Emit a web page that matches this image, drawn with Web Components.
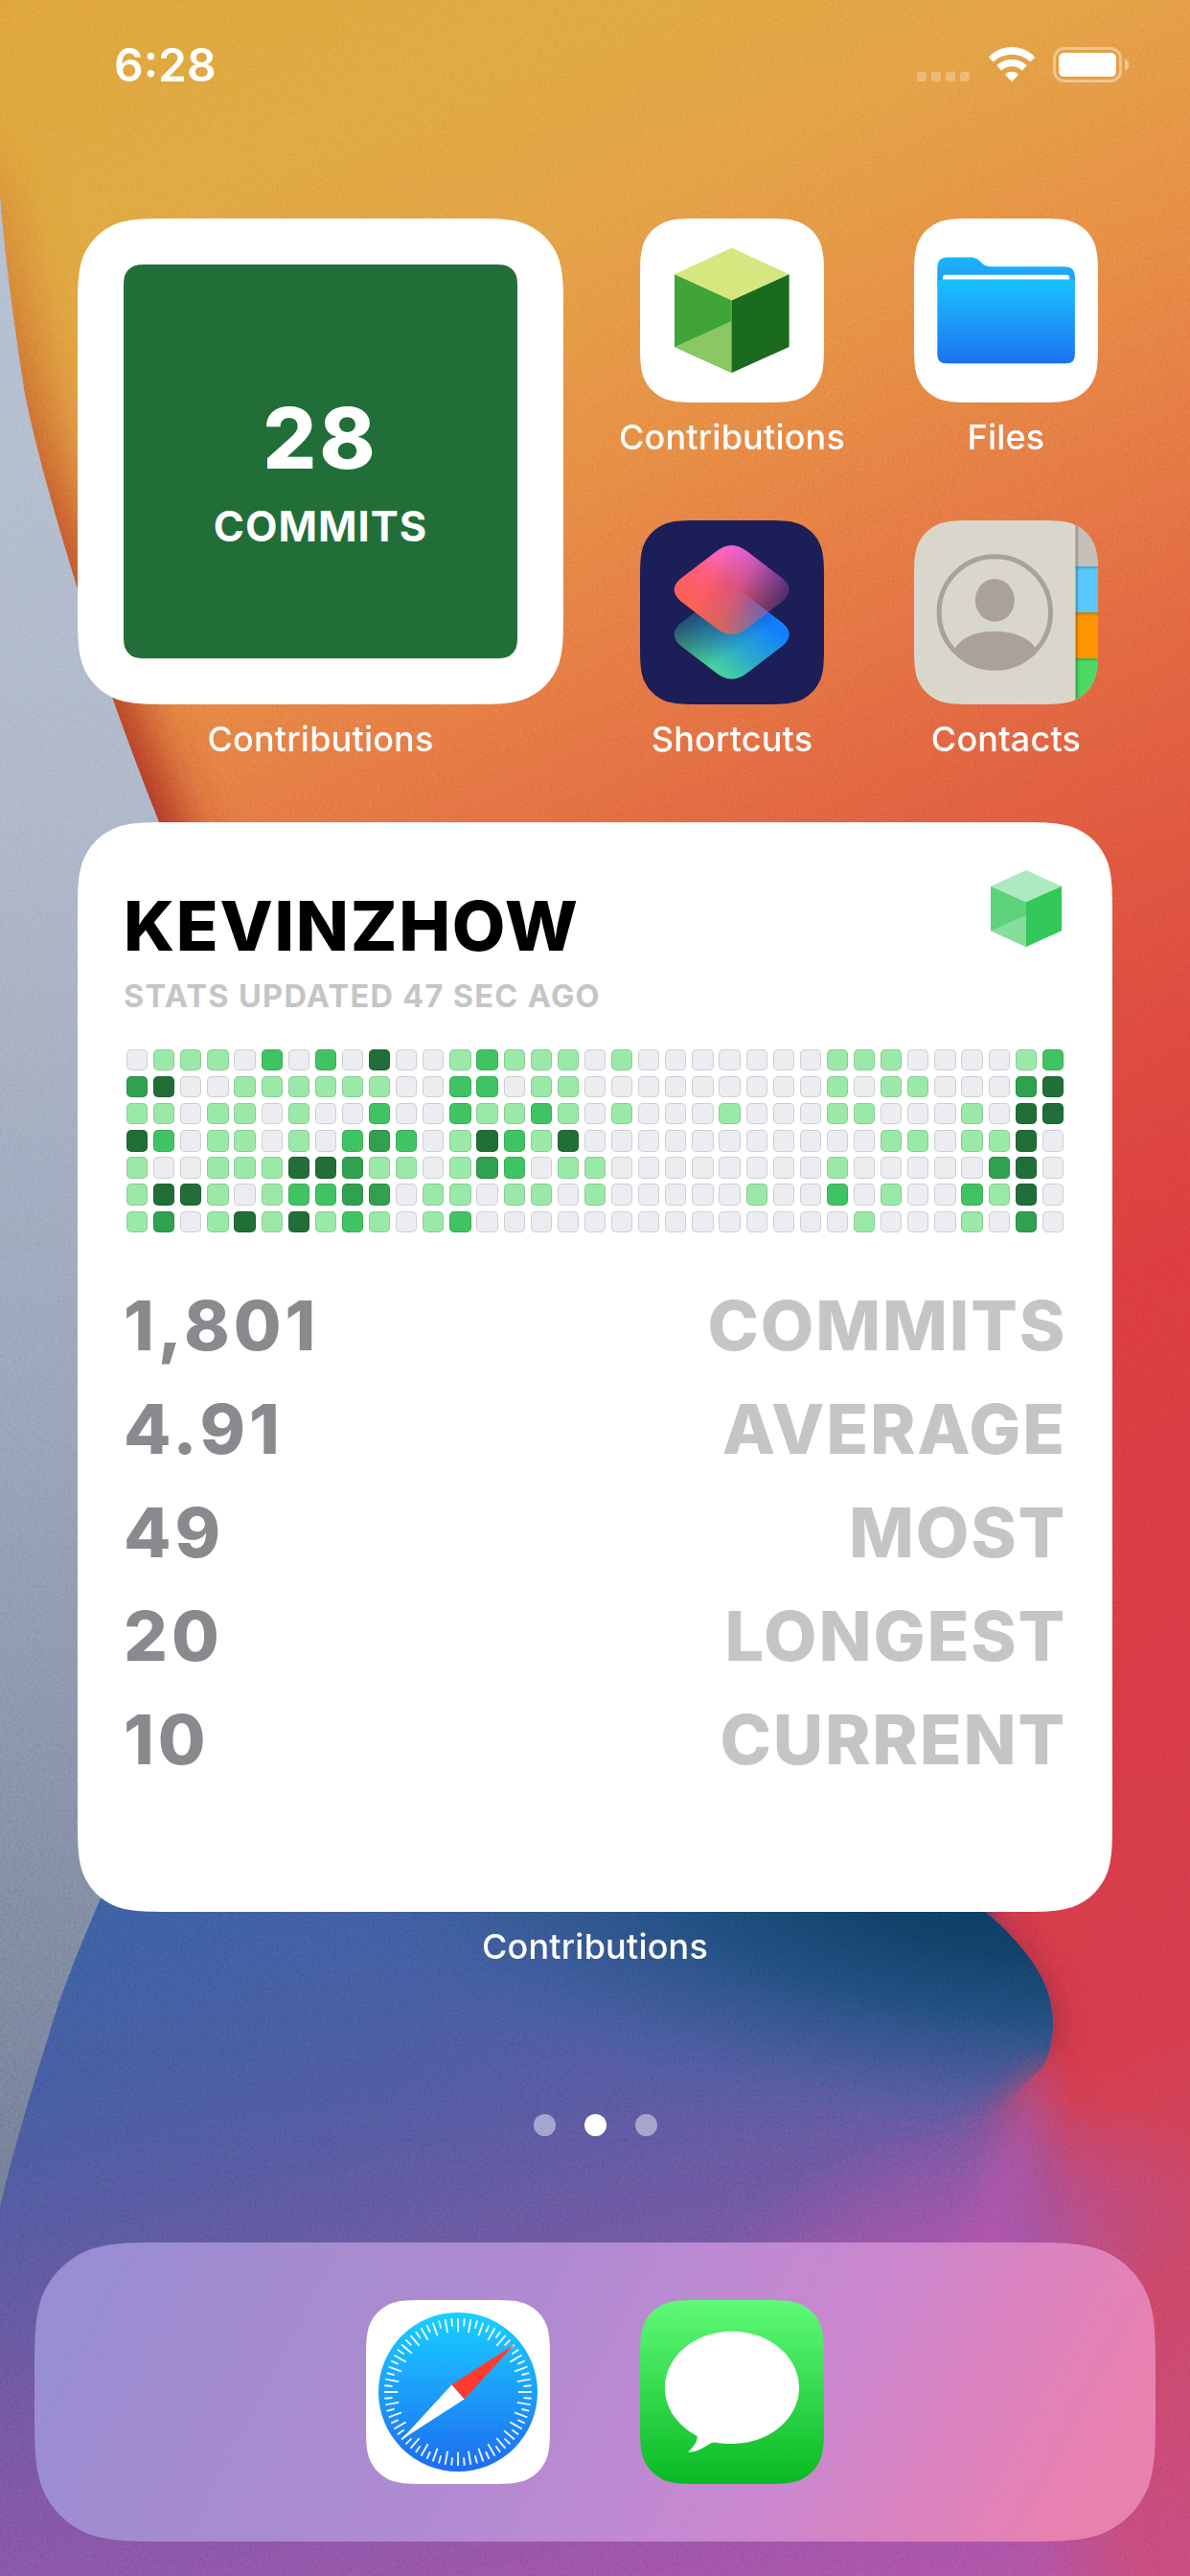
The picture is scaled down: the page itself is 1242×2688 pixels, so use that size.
<!DOCTYPE html>
<html lang="en">
<head>
<meta charset="utf-8">
<title>Home Screen</title>
<style>
    html, body {
        margin: 0;
        padding: 0;
    }

    body {
        width: 1242px;
        height: 2688px;
        overflow: hidden;
        font-family: "Inter", "Liberation Sans", sans-serif;
        color: white;
        -webkit-font-smoothing: antialiased;
    }
</style>
</head>
<body>

<home-screen>
    <status-bar slot="status" time="6:28"></status-bar>

    <app-widget label="Contributions" width="507" height="507">
        <commit-day count="28" unit="COMMITS"></commit-day>
    </app-widget>

    <div slot="apps" style="display: contents">
        <app-icon name="Contributions" icon="cube"></app-icon>
        <app-icon name="Files" icon="files"></app-icon>
        <app-icon name="Shortcuts" icon="shortcuts"></app-icon>
        <app-icon name="Contacts" icon="contacts"></app-icon>
    </div>

    <app-widget slot="large" label="Contributions" width="1080" height="1137">
        <commit-stats user="KEVINZHOW" updated="STATS UPDATED 47 SEC AGO">
            <stat-row value="1,801" label="COMMITS"></stat-row>
            <stat-row value="4.91" label="AVERAGE"></stat-row>
            <stat-row value="49" label="MOST"></stat-row>
            <stat-row value="20" label="LONGEST"></stat-row>
            <stat-row value="10" label="CURRENT"></stat-row>
        </commit-stats>
    </app-widget>

    <page-dots slot="dots" pages="3" current="1"></page-dots>

    <app-dock slot="dock">
        <app-icon icon="safari"></app-icon>
        <app-icon icon="messages"></app-icon>
    </app-dock>
</home-screen>

<script>
// Rounded rectangle with the continuous corners that iOS uses
function smoothRect(w, h, r) {
    const a = 1.528665 * r, b = 1.08849296 * r, c = 0.86840694 * r, d = 0.63149379 * r;
    const e = 0.07491139 * r, f = 0.37282383 * r, g = 0.16905956 * r;
    return `M${a} 0 L${w - a} 0 ` +
        `C${w - b} 0 ${w - c} 0 ${w - d} ${e} C${w - f} ${g} ${w - g} ${f} ${w - e} ${d} C${w} ${c} ${w} ${b} ${w} ${a} ` +
        `L${w} ${h - a} ` +
        `C${w} ${h - b} ${w} ${h - c} ${w - e} ${h - d} C${w - g} ${h - f} ${w - f} ${h - g} ${w - d} ${h - e} C${w - c} ${h} ${w - b} ${h} ${w - a} ${h} ` +
        `L${a} ${h} ` +
        `C${b} ${h} ${c} ${h} ${d} ${h - e} C${f} ${h - g} ${g} ${h - f} ${e} ${h - d} C0 ${h - c} 0 ${h - b} 0 ${h - a} ` +
        `L0 ${a} ` +
        `C0 ${b} 0 ${c} ${e} ${d} C${g} ${f} ${f} ${g} ${d} ${e} C${c} 0 ${b} 0 ${a} 0 Z`;
}

const ticks = () => {
    let out = '';
    for (let i = 0; i < 72; i++) {
        out += `<path d="M96 19 V${i % 2 ? 27.3 : 33.3}" transform="rotate(${i * 5} 96 96)"/>`;
    }
    return out;
};

const ICONS = {
    cube: `
        <rect width="192" height="192" fill="#fff"/>
        <path d="M95.7 30.6 L155.6 58.3 L95.7 85.4 L36 58.3 Z" fill="#d6e77f"/>
        <path d="M36 58.3 L95.7 85.4 V161 L36 134 Z" fill="#40a438"/>
        <path d="M36 134 L95.7 107 V161 Z" fill="#8bc863"/>
        <path d="M155.6 58.3 V134 L95.7 161 V85.4 Z" fill="#1a6b1e"/>`,
    files: `
        <defs>
            <linearGradient id="front" x1="0" y1="0" x2="0" y2="1">
                <stop offset="0" stop-color="#1ac3fd"/><stop offset="1" stop-color="#1d72f2"/>
            </linearGradient>
            <linearGradient id="back" x1="0" y1="0" x2="0" y2="1">
                <stop offset="0" stop-color="#1bb4fa"/><stop offset="1" stop-color="#1c9bf6"/>
            </linearGradient>
        </defs>
        <rect width="192" height="192" fill="#fff"/>
        <path d="M24.3 70 V51 Q24.3 40.6 34.7 40.6 H60 Q65 40.6 68.5 44.2 L71 46.8 Q74.5 50.2 80 50.2 H157.5 Q167.9 50.2 167.9 60.6 V70 Z" fill="url(#back)"/>
        <path d="M30 66 V61.5 Q30 58.8 32.7 58.8 H159.5 Q162.2 58.8 162.2 61.5 V66 Z" fill="#fff"/>
        <path d="M24.3 67 Q24.3 63.4 30 63.4 H162 Q167.9 63.4 167.9 67 V142 Q167.9 151.3 158.6 151.3 H33.6 Q24.3 151.3 24.3 142 Z" fill="url(#front)"/>`,
    shortcuts: `
        <defs>
            <linearGradient id="warm" gradientUnits="userSpaceOnUse" x1="60" y1="105" x2="105" y2="26">
                <stop offset="0" stop-color="#ff6349"/><stop offset=".5" stop-color="#fc5d78"/><stop offset="1" stop-color="#f968e2"/>
            </linearGradient>
            <linearGradient id="warmFade" gradientUnits="userSpaceOnUse" x1="72" y1="60" x2="146" y2="96">
                <stop offset="0" stop-color="#fff"/><stop offset=".4" stop-color="#fff" stop-opacity=".82"/><stop offset="1" stop-color="#fff" stop-opacity=".22"/>
            </linearGradient>
            <linearGradient id="cool" gradientUnits="userSpaceOnUse" x1="78" y1="164" x2="128" y2="102">
                <stop offset="0" stop-color="#4cdc94"/><stop offset=".5" stop-color="#2aa8cc"/><stop offset="1" stop-color="#137fff"/>
            </linearGradient>
            <linearGradient id="coolFade" gradientUnits="userSpaceOnUse" x1="56" y1="86" x2="92" y2="140">
                <stop offset="0" stop-color="#fff" stop-opacity=".2"/><stop offset="1" stop-color="#fff"/>
            </linearGradient>
            <mask id="warmMask"><rect width="192" height="192" fill="url(#warmFade)"/></mask>
            <mask id="coolMask"><rect width="192" height="192" fill="url(#coolFade)"/></mask>
        </defs>
        <rect width="192" height="192" fill="#1c1e57"/>
        <g mask="url(#coolMask)">
            <path d="M80 78.6 Q95.7 66.6 111.4 78.6 L149.4 107.6 Q162 119.1 149.4 130.6 L111.4 159.6 Q95.7 171.6 80 159.6 L42 130.6 Q29.4 119.1 42 107.6 Z" fill="url(#cool)"/>
        </g>
        <g mask="url(#warmMask)">
            <path d="M80 32 Q95.7 20 111.4 32 L149.4 61 Q162 72.5 149.4 84 L111.4 113 Q95.7 125 80 113 L42 84 Q29.4 72.5 42 61 Z" fill="url(#warm)"/>
        </g>`,
    contacts: `
        <defs>
            <linearGradient id="edge" x1="0" y1="0" x2="1" y2="0">
                <stop offset="0" stop-color="#000" stop-opacity=".28"/><stop offset="1" stop-color="#000" stop-opacity="0"/>
            </linearGradient>
            <linearGradient id="lip" x1="0" y1="0" x2="0" y2="1">
                <stop offset="0" stop-color="#000" stop-opacity=".2"/><stop offset="1" stop-color="#000" stop-opacity="0"/>
            </linearGradient>
        </defs>
        <rect width="192" height="192" fill="#d9d6cc"/>
        <rect x="168.6" width="24" height="48" fill="#c5c1ba"/>
        <rect x="168.6" y="48" width="24" height="48" fill="#5ac8fa"/>
        <rect x="168.6" y="96" width="24" height="48" fill="#ff9500"/>
        <rect x="168.6" y="144" width="24" height="48" fill="#4cd964"/>
        <rect x="168.6" y="48" width="24" height="4" fill="url(#lip)"/>
        <rect x="168.6" y="96" width="24" height="4" fill="url(#lip)"/>
        <rect x="168.6" y="144" width="24" height="4" fill="url(#lip)"/>
        <rect x="168.6" width="4" height="192" fill="url(#edge)"/>
        <circle cx="84.3" cy="96" r="58.2" fill="none" stroke="#a9a19a" stroke-width="5"/>
        <ellipse cx="84.3" cy="83.4" rx="20.5" ry="22.4" fill="#a9a19a"/>
        <path d="M43 133 C50 121 67 115.7 84.3 115.7 C101.6 115.7 118.6 121 126.5 133 L127 137 A58.2 58.2 0 0 1 42 137 Z" fill="#a9a19a"/>`,
    safari: `
        <defs>
            <linearGradient id="dial" x1="0" y1="0" x2="0" y2="1">
                <stop offset="0" stop-color="#19d0ff"/><stop offset="1" stop-color="#1e6bf2"/>
            </linearGradient>
        </defs>
        <rect width="192" height="192" fill="#fff"/>
        <circle cx="96" cy="96" r="83" fill="url(#dial)"/>
        <g stroke="#fff" stroke-width="1.9" stroke-opacity=".9">${ticks()}</g>
        <path d="M155.4 46 L89.4 88.4 L102.6 103.6 Z" fill="#ff3b30"/>
        <path d="M36.6 146 L89.4 88.4 L102.6 103.6 Z" fill="#fff"/>`,
    messages: `
        <defs>
            <linearGradient id="lime" x1="0" y1="0" x2="0" y2="1">
                <stop offset="0" stop-color="#5ffa78"/><stop offset="1" stop-color="#09b923"/>
            </linearGradient>
        </defs>
        <rect width="192" height="192" fill="url(#lime)"/>
        <path d="M96 32.8 C134.7 32.8 166 59 166 91.4 C166 123.8 134.7 150 96 150 C89.5 150 83.5 149.7 77.5 148.4 C71 149 64 158.6 50 158.8 C55 154 60.5 147.5 59.6 142 C38.5 130.5 26 112.5 26 91.4 C26 59 57.3 32.8 96 32.8 Z" fill="#fff"/>`
};

// One digit per day, one string per weekday, oldest week first
const DAYS = [
    '01110202040012111010000000111000012',
    '34001111110022011000000000101100034',
    '11011010020021121010001000110001044',
    '42011010232014214000000000001101140',
    '10011144311013201100000000100000340',
    '14410122330110110100000100201002140',
    '13014141210120000000000000010001030'
];

class HomeWallpaper extends HTMLElement {
    constructor() {
        super()
        .attachShadow({ mode: 'open' })
        .innerHTML =
            `
            <style>
            :host {
                display: block;
                width: 1242px;
                height: 2688px;
            }

            svg {
                display: block;
            }
            </style>
            <svg width="1242" height="2688" viewBox="0 0 1242 2688">
                <defs>
                    <linearGradient id="sky" gradientUnits="userSpaceOnUse" x1="0" y1="0" x2="1216" y2="2765">
                        <stop offset="0" stop-color="#dea43b"/>
                        <stop offset=".08" stop-color="#dea740"/>
                        <stop offset=".15" stop-color="#e3a044"/>
                        <stop offset=".225" stop-color="#e68d43"/>
                        <stop offset=".3" stop-color="#e57743"/>
                        <stop offset=".36" stop-color="#e26640"/>
                        <stop offset=".42" stop-color="#df573f"/>
                        <stop offset=".49" stop-color="#dd483e"/>
                        <stop offset=".56" stop-color="#dc3c3e"/>
                        <stop offset=".72" stop-color="#d63a46"/>
                        <stop offset=".8" stop-color="#d53b4a"/>
                        <stop offset=".87" stop-color="#cb4562"/>
                        <stop offset="1" stop-color="#c54c84"/>
                    </linearGradient>
                    <linearGradient id="steel" x1="0" y1="0" x2="0" y2="1">
                        <stop offset="0" stop-color="#b3bfd0"/>
                        <stop offset=".3" stop-color="#adb7c9"/>
                        <stop offset=".6" stop-color="#99a3b8"/>
                        <stop offset=".85" stop-color="#808ba3"/>
                        <stop offset="1" stop-color="#707d95"/>
                    </linearGradient>
                    <linearGradient id="sea" gradientUnits="userSpaceOnUse" x1="0" y1="2000" x2="235" y2="2941">
                        <stop offset="0" stop-color="#3b5fa2"/>
                        <stop offset=".2" stop-color="#465ba0"/>
                        <stop offset=".35" stop-color="#5859a0"/>
                        <stop offset=".48" stop-color="#6c57a0"/>
                        <stop offset=".6" stop-color="#7c56a4"/>
                        <stop offset=".75" stop-color="#8e54a8"/>
                        <stop offset=".88" stop-color="#a452a8"/>
                        <stop offset="1" stop-color="#b652a2"/>
                    </linearGradient>
                    <radialGradient id="deep" gradientUnits="userSpaceOnUse" cx="0" cy="0" r="1" gradientTransform="translate(1090 1975) rotate(4) scale(780 262)">
                        <stop offset="0" stop-color="#0b3c60"/>
                        <stop offset=".25" stop-color="#113f66"/>
                        <stop offset=".5" stop-color="#1c4c7a" stop-opacity=".92"/>
                        <stop offset=".75" stop-color="#2a5488" stop-opacity=".5"/>
                        <stop offset="1" stop-color="#3b60a5" stop-opacity="0"/>
                    </radialGradient>
                    <radialGradient id="magenta" gradientUnits="userSpaceOnUse" cx="0" cy="0" r="1" gradientTransform="translate(975 2370) rotate(-22) scale(310 150)">
                        <stop offset="0" stop-color="#b052aa" stop-opacity=".85"/>
                        <stop offset=".5" stop-color="#a854a8" stop-opacity=".5"/>
                        <stop offset="1" stop-color="#a854a8" stop-opacity="0"/>
                    </radialGradient>
                    <linearGradient id="shadeFade" gradientUnits="userSpaceOnUse" x1="0" y1="200" x2="0" y2="860">
                        <stop offset="0" stop-color="#d4792e" stop-opacity=".5"/>
                        <stop offset=".5" stop-color="#c04d28" stop-opacity=".9"/>
                        <stop offset="1" stop-color="#a82a22"/>
                    </linearGradient>
                    <linearGradient id="hardFade" gradientUnits="userSpaceOnUse" x1="0" y1="2135" x2="0" y2="2205">
                        <stop offset="0" stop-color="#fff"/><stop offset="1" stop-color="#fff" stop-opacity="0"/>
                    </linearGradient>
                    <mask id="hardMask"><rect width="1242" height="2688" fill="url(#hardFade)"/></mask>
                    <filter id="blur10" x="-60%" y="-30%" width="220%" height="160%"><feGaussianBlur stdDeviation="11"/></filter>
                    <filter id="blur16" x="-60%" y="-30%" width="220%" height="160%"><feGaussianBlur stdDeviation="16"/></filter>
                    <filter id="blur26" x="-80%" y="-50%" width="260%" height="200%"><feGaussianBlur stdDeviation="26"/></filter>
                    <filter id="blur34" x="-30%" y="-30%" width="160%" height="160%"><feGaussianBlur stdDeviation="36"/></filter>
                    <filter id="grain" x="0" y="0" width="100%" height="100%">
                        <feTurbulence type="fractalNoise" baseFrequency=".35" numOctaves="2" seed="4"/>
                        <feColorMatrix values="1.4 0 0 0 -.2  1.4 0 0 0 -.2  1.4 0 0 0 -.2  0 0 0 0 1"/>
                    </filter>
                </defs>

                <rect width="1242" height="2688" fill="url(#sky)"/>

                <!-- shadow that the grey fold throws on the orange one -->
                <path d="M-60 150 L-8 205 Q5 300 26 411 C45 500 82 616 117 727 L166 858 L190 920 L-60 920 Z" fill="url(#shadeFade)" stroke="url(#shadeFade)" stroke-width="44" filter="url(#blur26)"/>

                <!-- shadow beside the navy tip -->
                <path d="M960 1930 C1040 1995 1106 2060 1108 2110 Q1102 2140 1090 2150 L960 2120 Z" fill="#8e2440" opacity=".55" filter="url(#blur16)"/>

                <!-- purple body, melting into the red on its right -->
                <path d="M-140 1900 H960 L1015 2070 L1034 2140 C1056 2190 1082 2240 1088 2300 C1094 2400 1120 2560 1150 2840 H-140 Z" fill="url(#sea)" filter="url(#blur34)"/>
                <path d="M-100 2000 H1000 L1060 2160 L1010 2200 L-100 2200 Z" fill="url(#sea)" filter="url(#blur16)"/>

                <rect y="2100" width="1242" height="588" fill="url(#magenta)"/>

                <path d="M-100 1900 H1000 L1050 2100 L1070 2156 L1030 2195 L960 2240 L-100 2260 Z" fill="url(#deep)" filter="url(#blur10)"/>
                <path d="M1090 2150 C1075 2185 1046 2230 1020 2290 L990 2380 L1060 2380 C1064 2300 1084 2230 1096 2170 Z" fill="#b553a8" opacity=".6" filter="url(#blur16)"/>

                <g mask="url(#hardMask)">
                    <path d="M-100 1900 H940 C975 1935 1005 1965 1028 1995 C1040 2004 1053 2017 1064 2030 C1085 2054 1099 2082 1099 2110 C1099 2128 1096 2143 1088 2157 L1070 2174 L1030 2216 L-100 2216 Z" fill="url(#sea)"/>
                    <path d="M-100 1900 H940 C975 1935 1005 1965 1028 1995 C1040 2004 1053 2017 1064 2030 C1085 2054 1099 2082 1099 2110 C1099 2128 1096 2143 1088 2157 L1070 2174 L1030 2216 L-100 2216 Z" fill="url(#deep)"/>
                </g>

                <path d="M0 205 Q8 300 26 411 C44 500 82 620 117 727 C132 770 148 812 166 858 L240 1400 L105 1981 C84 2030 66 2072 51.5 2122 C32 2184 12 2250 0 2303 Z" fill="url(#steel)"/>

                <rect width="1242" height="2688" filter="url(#grain)" opacity=".09" style="mix-blend-mode: overlay"/>
            </svg>
            `
    }
}

class HomeScreen extends HTMLElement {
    constructor() {
        super()
        .attachShadow({ mode: 'open' })
        .innerHTML =
            `
            <style>
            :host {
                display: grid;
                width: 1242px;
                height: 2688px;
                overflow: hidden;
            }

            home-wallpaper, .screen {
                grid-area: 1 / 1;
            }

            .screen {
                display: flex;
                flex-direction: column;
                box-sizing: border-box;
                height: 2688px;
                padding-bottom: 36px;
                z-index: 1;
            }

            .top {
                display: flex;
                gap: 80px;
                margin: 0 0 65px 81px;
            }

            .apps {
                display: grid;
                grid-template-columns: 192px 192px;
                column-gap: 94px;
                row-gap: 65px;
                align-content: start;
            }

            .large {
                margin-left: 81px;
            }

            .dots {
                margin-top: 152.5px;
            }

            .dock {
                margin: auto 36px 0;
            }
            </style>
            <home-wallpaper></home-wallpaper>
            <div class="screen">
                <slot name="status"></slot>
                <div class="top">
                    <slot></slot>
                    <div class="apps"><slot name="apps"></slot></div>
                </div>
                <div class="large"><slot name="large"></slot></div>
                <div class="dots"><slot name="dots"></slot></div>
                <div class="dock"><slot name="dock"></slot></div>
            </div>
            `
    }
}

class StatusBar extends HTMLElement {
    constructor() {
        super()
        .attachShadow({ mode: 'open' })
        .innerHTML =
            `
            <style>
            :host {
                display: flex;
                justify-content: space-between;
                box-sizing: border-box;
                height: 228px;
                padding: 37px 64px 0 119px;
            }

            .time {
                margin-top: 1px;
                font-size: 48px;
                font-weight: 600;
                line-height: 60px;
            }

            .right {
                display: flex;
                align-items: flex-start;
                padding-top: 12px;
            }

            .signal {
                display: flex;
                gap: 5px;
                margin: 26px 20px 0 0;
            }

            .signal i {
                width: 10px;
                height: 10px;
                border-radius: 3px;
                background: rgba(255, 255, 255, .28);
            }

            svg {
                display: block;
            }

            .battery {
                margin-left: 19px;
            }
            </style>
            <div class="time"></div>
            <div class="right">
                <div class="signal"><i></i><i></i><i></i><i></i></div>
                <svg width="48" height="36" viewBox="0 0 48 36" fill="#fff">
                    <path d="M.4 10 C7 3.5 15 0 24 0 C33 0 41 3.5 47.6 10 Q48.2 10.7 47.6 11.3 L44 15 Q43.3 15.6 42.6 15 C37.5 10.5 31 8 24 8 C17 8 10.5 10.5 5.4 15 Q4.7 15.6 4 15 L.4 11.3 Q-.2 10.7 .4 10 Z"/>
                    <path d="M8.8 18.7 C13 15 18.2 13 24 13 C29.8 13 35 15 39.2 18.7 Q39.9 19.4 39.2 20.1 L35.4 23.9 Q34.7 24.5 34 23.9 C31.2 21.5 27.8 20.3 24 20.3 C20.2 20.3 16.8 21.5 14 23.9 Q13.3 24.5 12.6 23.9 L8.8 20.1 Q8.1 19.4 8.8 18.7 Z"/>
                    <path d="M17.6 28 C19.3 26.6 21.5 25.8 24 25.8 C26.5 25.8 28.7 26.6 30.4 28 Q31.3 28.7 30.5 29.5 L24.7 35.4 Q24 36 23.3 35.4 L17.5 29.5 Q16.7 28.7 17.6 28 Z"/>
                </svg>
                <svg class="battery" width="79" height="37" viewBox="0 0 79 37">
                    <rect x="1.5" y="1.5" width="69" height="34" rx="10.5" fill="none" stroke="#fff" stroke-opacity=".4" stroke-width="3"/>
                    <rect x="6" y="6" width="60" height="25" rx="5.5" fill="#fff"/>
                    <path d="M75 12 C80.3 14 80.3 23 75 25 Z" fill="#fff" fill-opacity=".45"/>
                </svg>
            </div>
            `
        this.shadowRoot.querySelector('.time').innerText = this.getAttribute('time');
    }
}

class AppIcon extends HTMLElement {
    constructor() {
        super()
        .attachShadow({ mode: 'open' })
        .innerHTML =
            `
            <style>
            :host {
                display: flex;
                flex-direction: column;
                align-items: center;
                width: 192px;
            }

            svg {
                display: block;
                flex: none;
                clip-path: path('${smoothRect(192, 192, 43)}');
            }

            .name {
                margin-top: 14px;
                font-size: 36px;
                font-weight: 500;
                line-height: 44px;
                letter-spacing: .2px;
                white-space: nowrap;
            }

            .name:empty {
                display: none;
            }
            </style>
            <svg width="192" height="192" viewBox="0 0 192 192">${ICONS[this.getAttribute('icon')]}</svg>
            <div class="name"></div>
            `
        this.shadowRoot.querySelector('.name').innerText = this.getAttribute('name') || '';
    }
}

class AppWidget extends HTMLElement {
    constructor() {
        super()
        const w = Number(this.getAttribute('width'));
        const h = Number(this.getAttribute('height'));
        this.attachShadow({ mode: 'open' })
        .innerHTML =
            `
            <style>
            :host {
                display: block;
                width: ${w}px;
            }

            .card {
                box-sizing: border-box;
                height: ${h}px;
                padding: 48px;
                background: white;
                clip-path: path('${smoothRect(w, h, 66)}');
            }

            .label {
                margin-top: 14px;
                font-size: 36px;
                font-weight: 500;
                line-height: 44px;
                letter-spacing: .2px;
                text-align: center;
            }
            </style>
            <div class="card"><slot></slot></div>
            <div class="label"></div>
            `
        this.shadowRoot.querySelector('.label').innerText = this.getAttribute('label');
    }
}

class CommitDay extends HTMLElement {
    constructor() {
        super()
        .attachShadow({ mode: 'open' })
        .innerHTML =
            `
            <style>
            :host {
                display: block;
                box-sizing: border-box;
                height: 411px;
                padding-top: 131px;
                background: #216e39;
                clip-path: path('${smoothRect(411, 411, 18)}');
                text-align: center;
            }

            .count {
                font-size: 88px;
                font-weight: 800;
                line-height: 100px;
                letter-spacing: 3px;
            }

            .unit {
                margin-top: 16px;
                font-size: 43.5px;
                font-weight: 650;
                line-height: 52px;
                letter-spacing: 1px;
            }
            </style>
            <div class="count"></div>
            <div class="unit"></div>
            `
        this.shadowRoot.querySelector('.count').innerText = this.getAttribute('count');
        this.shadowRoot.querySelector('.unit').innerText = this.getAttribute('unit');
    }
}

class CommitGraph extends HTMLElement {
    constructor() {
        super()
        .attachShadow({ mode: 'open' })
        .innerHTML =
            `
            <style>
            :host {
                display: grid;
                grid-template-columns: repeat(35, 1fr);
                grid-auto-rows: 22.2px;
                gap: 5.9px;
                padding: 0 3px;
            }

            i {
                box-sizing: border-box;
                border: 1.5px solid rgba(27, 31, 35, .14);
                border-radius: 5px;
                background: #ebedf0;
            }

            .l1 { background: #9be9a8; }
            .l2 { background: #40c463; }
            .l3 { background: #30a14e; }
            .l4 { background: #216e39; }
            </style>
            ${DAYS.join('').split('').map(level => `<i class="l${level}"></i>`).join('')}
            `
    }
}

class CommitStats extends HTMLElement {
    constructor() {
        super()
        .attachShadow({ mode: 'open' })
        .innerHTML =
            `
            <style>
            :host {
                display: block;
                color: black;
            }

            header {
                display: flex;
                justify-content: space-between;
                align-items: flex-start;
                height: 153.4px;
            }

            h1 {
                margin: 15.8px 0 0;
                font-size: 72px;
                font-weight: 780;
                line-height: 88px;
                letter-spacing: 1.7px;
            }

            p {
                margin: 10.6px 0 0;
                font-size: 32.5px;
                font-weight: 650;
                line-height: 40px;
                letter-spacing: 1.3px;
                color: #c5c5c7;
            }

            svg {
                display: block;
                margin: 2px 5px 0 0;
            }

            commit-graph {
                margin-top: 35.7px;
            }

            .rows {
                margin-top: 43.3px;
            }
            </style>
            <header>
                <div>
                    <h1></h1>
                    <p></p>
                </div>
                <svg width="74" height="80" viewBox="0 0 74 80">
                    <path d="M37 0 L74 16.7 L37 33.3 L0 16.7 Z" fill="#aeeabf"/>
                    <path d="M0 16.7 L37 33.3 V80 L0 63.3 Z" fill="#5dd37b"/>
                    <path d="M0 63.3 L37 47 V80 Z" fill="#86de9c"/>
                    <path d="M74 16.7 V63.3 L37 80 V33.3 Z" fill="#34c759"/>
                </svg>
            </header>
            <commit-graph></commit-graph>
            <div class="rows"><slot></slot></div>
            `
        this.shadowRoot.querySelector('h1').innerText = this.getAttribute('user');
        this.shadowRoot.querySelector('p').innerText = this.getAttribute('updated');
    }
}

class StatRow extends HTMLElement {
    constructor() {
        super()
        .attachShadow({ mode: 'open' })
        .innerHTML =
            `
            <style>
            :host {
                display: flex;
                justify-content: space-between;
                font-size: 72px;
                font-weight: 780;
                line-height: 108px;
            }

            .value {
                color: #8a8a8e;
                letter-spacing: 4px;
            }

            .label {
                color: #c5c5c7;
                letter-spacing: 1.8px;
            }
            </style>
            <span class="value"></span>
            <span class="label"></span>
            `
        this.shadowRoot.querySelector('.value').innerText = this.getAttribute('value');
        this.shadowRoot.querySelector('.label').innerText = this.getAttribute('label');
    }
}

class PageDots extends HTMLElement {
    constructor() {
        super()
        .attachShadow({ mode: 'open' })
        .innerHTML =
            `
            <style>
            :host {
                display: flex;
                justify-content: center;
                gap: 30px;
            }

            i {
                width: 23px;
                height: 23px;
                border-radius: 50%;
                background: rgba(255, 255, 255, .45);
            }

            .on {
                background: white;
            }
            </style>
            `
        for (let i = 0; i < Number(this.getAttribute('pages')); i++) {
            const dot = document.createElement('i');
            if (i === Number(this.getAttribute('current'))) dot.className = 'on';
            this.shadowRoot.appendChild(dot);
        }
    }
}

class AppDock extends HTMLElement {
    constructor() {
        super()
        .attachShadow({ mode: 'open' })
        .innerHTML =
            `
            <style>
            :host {
                display: flex;
                justify-content: center;
                gap: 94px;
                box-sizing: border-box;
                height: 312px;
                padding-top: 60px;
                clip-path: path('${smoothRect(1170, 312, 93)}');
                background: linear-gradient(118deg, #998dd4 6%, #a58ccf 22%, #b08ad1 42%, #bd8ad2 55%, #cb87cf 68%, #db83bf 80%, #e881b0 92%, #e981ae 100%);
            }
            </style>
            <slot></slot>
            `
    }
}

window.customElements.define("home-wallpaper", HomeWallpaper);
window.customElements.define("home-screen", HomeScreen);
window.customElements.define("status-bar", StatusBar);
window.customElements.define("app-icon", AppIcon);
window.customElements.define("app-widget", AppWidget);
window.customElements.define("commit-day", CommitDay);
window.customElements.define("commit-graph", CommitGraph);
window.customElements.define("commit-stats", CommitStats);
window.customElements.define("stat-row", StatRow);
window.customElements.define("page-dots", PageDots);
window.customElements.define("app-dock", AppDock);
</script>
</body>
</html>
